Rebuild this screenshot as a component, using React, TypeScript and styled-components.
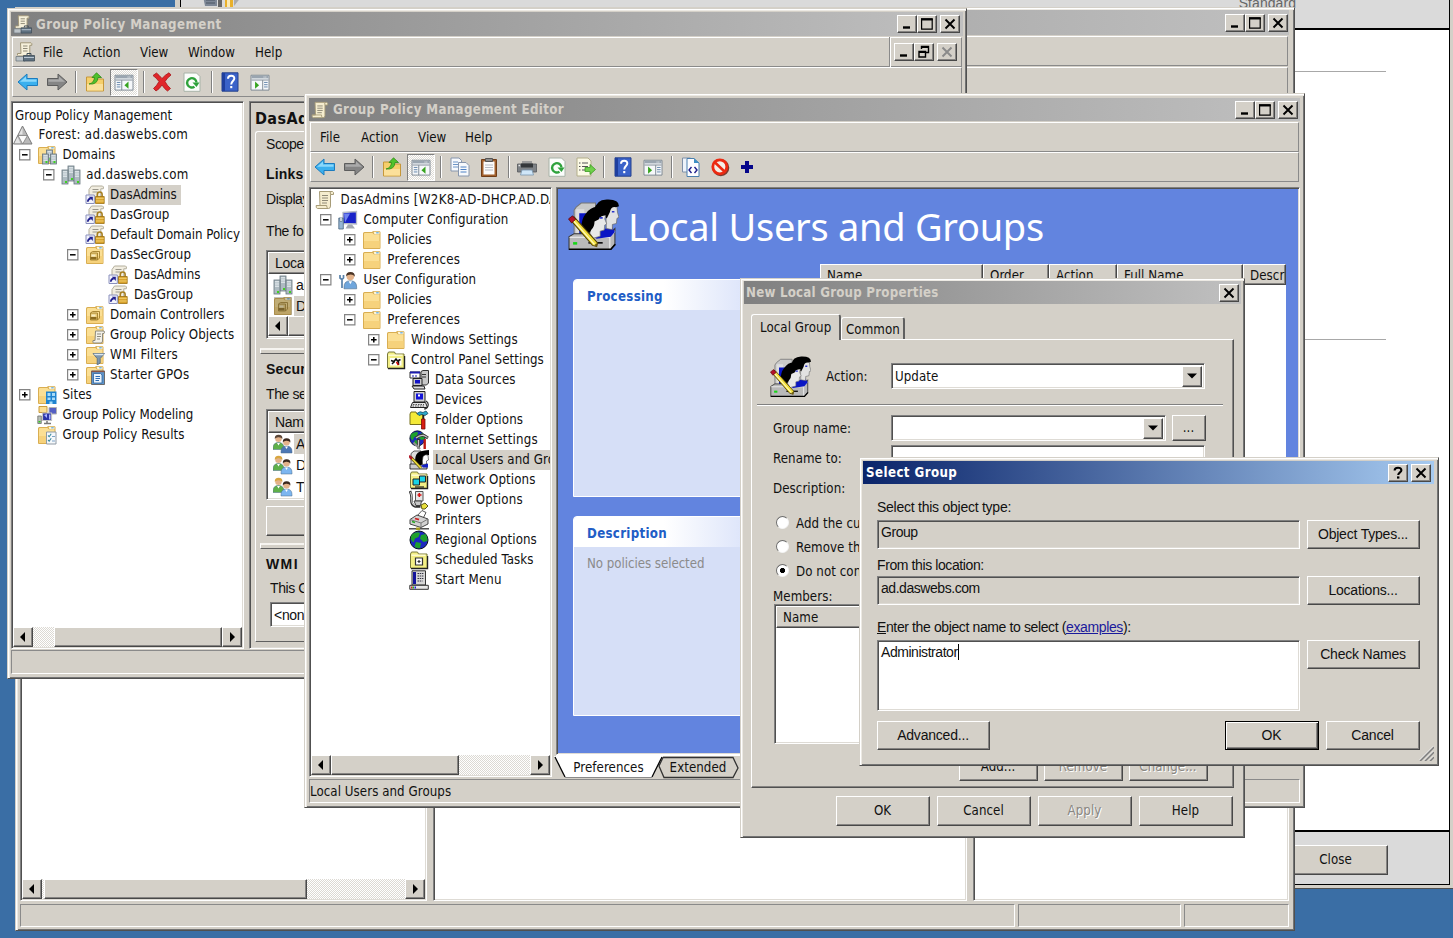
import React from 'react';
import styled, { createGlobalStyle, css } from 'styled-components';

const FACE = '#d4d0c8';
const TAHOMA = `'DejaVu Sans Condensed', 'DejaVu Sans', sans-serif`;
const MSSANS = `'Liberation Sans', sans-serif`;

const Global = createGlobalStyle`
  * { box-sizing: border-box; }
  html, body { margin: 0; padding: 0; overflow: hidden; }
  body { font: 13.2px ${TAHOMA}; font-stretch: condensed; letter-spacing: 0.06px; color: #111; background: #3a6ea5; }
  svg { display: block; flex: none; }
`;

const sunken = css`
  border: 1px solid;
  border-color: #808080 #fff #fff #808080;
  box-shadow: inset 1px 1px #505050, inset -1px -1px #dedbd5;
`;
const raised = css`
  border: 1px solid;
  border-color: #fff #484848 #484848 #fff;
  box-shadow: inset -1px -1px #868482;
`;

const Desktop = styled.main`
  position: relative;
  width: 1453px;
  height: 938px;
  overflow: hidden;
  background: #3a6ea5;
`;

const Win = styled.section<{ $x: number; $y: number; $w: number; $h: number; $pad: string }>`
  position: absolute;
  left: ${p => p.$x}px;
  top: ${p => p.$y}px;
  width: ${p => p.$w}px;
  height: ${p => p.$h}px;
  padding: ${p => p.$pad};
  display: flex;
  flex-direction: column;
  overflow: hidden;
  background: ${FACE};
  border: 1px solid;
  border-color: #d4d0c8 #505050 #505050 #d4d0c8;
  box-shadow: inset 1px 1px #fff, inset 2px 2px #ece9e3, inset -1px -1px #747474;
`;

const TitleBar = styled.header<{ $h: number; $active?: boolean; $sp?: number; $pr?: number }>`
  flex: none;
  height: ${p => p.$h}px;
  display: flex;
  align-items: center;
  padding: 0 ${p => p.$pr ?? 3}px 0 2px;
  font-weight: bold;
  letter-spacing: ${p => p.$sp ?? 0}px;
  color: ${p => (p.$active ? '#fff' : '#d4d0c8')};
  background: linear-gradient(to right, ${p => (p.$active ? '#0a246a, #a6caf0' : '#808080, #c0c0c0')});
  white-space: nowrap;
`;
const TitleText = styled.span<{ $ml?: number }>`
  flex: 1;
  margin-left: ${p => p.$ml ?? 0}px;
`;
const Caption = styled.button<{ $ml?: number }>`
  ${raised}
  flex: none;
  width: 20px;
  height: 18px;
  padding: 0;
  margin-left: ${p => p.$ml ?? 0}px;
  display: flex;
  align-items: center;
  justify-content: center;
  background: ${FACE};
`;

const Bar = styled.div<{ $h: number; $mt?: number }>`
  flex: none;
  display: flex;
  align-items: center;
  height: ${p => p.$h}px;
  margin: ${p => p.$mt ?? 0}px 1px 0 1px;
  border: 1px solid;
  border-color: #fff #8a8a8a #8a8a8a #fff;
`;
const MenuItem = styled.span<{ $w: number }>`
  width: ${p => p.$w}px;
`;
const Tool = styled.span<{ $w: number; $pressed?: boolean }>`
  width: ${p => p.$w}px;
  height: 27px;
  flex: none;
  display: flex;
  align-items: center;
  justify-content: center;
  ${p => p.$pressed && css`
    border: 1px solid;
    border-color: #808080 #fff #fff #808080;
    background: repeating-conic-gradient(#fff 0 25%, #dedbd5 0 50%) 0 0 / 2px 2px;
  `}
`;
const ToolSep = styled.i<{ $l: number; $r: number }>`
  flex: none;
  width: 2px;
  height: 22px;
  margin: 0 ${p => p.$r}px 0 ${p => p.$l}px;
  border-left: 1px solid #808080;
  border-right: 1px solid #fff;
`;

const Panes = styled.div<{ $mt: number; $h: number }>`
  flex: none;
  display: flex;
  margin-top: ${p => p.$mt}px;
  height: ${p => p.$h}px;
`;
const Pane = styled.div<{ $w?: number; $ml?: number; $bg?: string }>`
  ${sunken}
  ${p => (p.$w ? `flex: none; width: ${p.$w}px;` : 'flex: 1;')}
  margin-left: ${p => p.$ml ?? 0}px;
  padding: 1px;
  display: flex;
  flex-direction: column;
  overflow: hidden;
  background: ${p => p.$bg ?? '#fff'};
`;
const Tree = styled.ul<{ $pt?: number }>`
  flex: 1;
  margin: 0;
  padding: ${p => p.$pt ?? 1}px 0 0;
  list-style: none;
  overflow: hidden;
`;
const TreeRow = styled.li<{ $pl: number }>`
  display: flex;
  align-items: center;
  height: 20px;
  padding-left: ${p => p.$pl}px;
  white-space: nowrap;
`;
const ExpandSlot = styled.span`
  flex: none;
  width: 18px;
`;
const TreeLabel = styled.span<{ $sel?: boolean; $sp?: number }>`
  margin-left: 3.5px;
  padding: 0 4px 0 2px;
  line-height: 20px;
  letter-spacing: ${p => p.$sp ?? 0.08}px;
  background: ${p => (p.$sel ? FACE : 'transparent')};
`;

const ScrollRow = styled.div`
  flex: none;
  height: 20px;
  display: flex;
  background: repeating-conic-gradient(#fff 0 25%, #dcd9d3 0 50%) 0 0 / 2px 2px;
`;
const ScrollBtn = styled.span`
  ${raised}
  flex: none;
  width: 20px;
  height: 20px;
  display: flex;
  align-items: center;
  justify-content: center;
  background: ${FACE};
`;
const Thumb = styled.span<{ $ml: number; $w: number }>`
  ${raised}
  flex: none;
  margin-left: ${p => p.$ml}px;
  width: ${p => p.$w}px;
  background: ${FACE};
`;
const Grow = styled.span`
  flex: 1;
`;

const StatusRow = styled.footer<{ $mt: number; $h: number }>`
  flex: none;
  display: flex;
  gap: 3px;
  margin-top: ${p => p.$mt}px;
  height: ${p => p.$h}px;
`;
const StatusCell = styled.div<{ $w?: number }>`
  ${p => (p.$w ? `width: ${p.$w}px;` : 'flex: 1;')}
  line-height: 23px;
  border: 1px solid;
  border-color: #8a8a8a #fff #fff #8a8a8a;
`;

const Btn = styled.button<{ $w: number; $h: number; $def?: boolean; $off?: boolean }>`
  ${raised}
  flex: none;
  width: ${p => p.$w}px;
  height: ${p => p.$h}px;
  padding: 0 1px 1px 0;
  font: inherit;
  letter-spacing: inherit;
  color: #111;
  background: ${FACE};
  ${p => p.$def && css`
    border-color: #000;
    box-shadow: inset 1px 1px #fff, inset -1px -1px #404040, inset -2px -2px #868482;
  `}
  ${p => p.$off && css`
    color: #8a8782;
    text-shadow: 1px 1px #fff;
  `}
`;

/* ---------- glyphs ---------- */

type G = { s?: number };
const Svg = ({ s = 20, children }: { s?: number; children: React.ReactNode }) => (
  <svg width={s} height={s} viewBox="0 0 20 20">{children}</svg>
);

const MinG = () => <svg width="12" height="12" viewBox="0 0 12 12"><path d="M2 9.5h7" stroke="#000" strokeWidth="2.4" /></svg>;
const MaxG = () => (
  <svg width="14" height="14" viewBox="0 0 14 14"><path d="M1.6 2.6h10.6v9.600H1.6z" fill="none" stroke="#000" strokeWidth="1.2" /><path d="M1 2.2h11.8" stroke="#000" strokeWidth="2.2" /></svg>
);
const CloseG = ({ c = '#000' }: { c?: string }) => (
  <svg width="12" height="12" viewBox="0 0 12 12"><path d="M1.5 1.5l9 9M10.5 1.5l-9 9" stroke={c} strokeWidth="1.9" /></svg>
);
const RestoreG = () => (
  <svg width="14" height="14" viewBox="0 0 14 14" fill="none" stroke="#000"><path d="M4.5 4V1.5h7v6H9M4.5 2.4h7" strokeWidth="1.4" /><path d="M2 6.5h6.5v5.5H2zM2 7.2h6.5" strokeWidth="1.4" /></svg>
);
const HelpG = () => (
  <svg width="12" height="14" viewBox="0 0 12 14"><path d="M2.6 4.4C2.6 2.5 4 1.8 6 1.8s3.4.8 3.4 2.5C9.400 6.400 6.300 6.300 6.200 9" fill="none" stroke="#000" strokeWidth="2.1" /><path d="M5 10.400h2.400v2.200H5z" /></svg>
);
const ArrowG = ({ right }: { right?: boolean }) => (
  <svg width="10" height="10" viewBox="0 0 10 10"><path d={right ? 'M3 0l5 5-5 5z' : 'M7 0L2 5l5 5z'} /></svg>
);
const DownG = () => <svg width="10" height="6" viewBox="0 0 10 6"><path d="M0 .5h10L5 5.500z" /></svg>;

const Expander = ({ open }: { open?: boolean }) => (
  <svg width="12" height="12" viewBox="0 0 12 12"><path d="M.6.6h10.300v10.300H.6z" fill="#fff" stroke="#848484" strokeWidth="1.200" /><path d={open ? 'M3 5.800h5.600' : 'M3 5.800h5.600M5.800 3v5.600'} stroke="#000" strokeWidth="1.500" /></svg>
);

const FolderShape = () => (
  <g>
    <path d="M1 3.500Q1 2 2.500 2H10l1-1h6.500L18.500 2v16q0 1-1 1H2q-1 0-1-1z" fill="#d9ae52" />
    <path d="M2 4q0-1 1-1h7.500L12 4.500h5.500V18H2z" fill="#fbdf94" />
    <path d="M2 11h15.500v7H2z" fill="#f6d27c" />
    <path d="M11.500 1.800h6v2.400h-5z" fill="#fff6d8" /><path d="M14.200 2.200h2.500v1.200h-2.500z" fill="#59a7e6" />
  </g>
);
const ScrollShape = () => (
  <g>
    <path d="M4.500 1.500h13q1.500.5 1 3h-3V16q0 2.500-2 2.500H2.500q-1.800-.5-1.300-3H5z" fill="#f5edcf" stroke="#a79c78" />
    <path d="M15.500 4.500q-1-3 1-3M13 18.500q-1.500-.5-1.300-3H1.500" fill="none" stroke="#a79c78" />
    <path d="M7 5.500h6M7 8h6M7 10.500h6M7 13h5" stroke="#8f8a78" strokeWidth="1.100" />
  </g>
);
const Folder = ({ s }: G) => <Svg s={s}><FolderShape /></Svg>;
const ScrollI = ({ s }: G) => <Svg s={s}><ScrollShape /></Svg>;
const ScrollBox = ({ s }: G) => (
  <Svg s={s}>
    <path d="M5.500 .8h10.500q1.300.5.800 2.500h-2V14H3.500q-1.500-.5-1-2.500H6z" fill="#f6f0da" stroke="#a09678" /><path d="M8 4h4.500M8 6.500h4.500M8 9h4.500" stroke="#8f8a78" />
    <path d="M1 14.500h9V19H1z" fill="#bcc3c8" stroke="#70797f" strokeWidth=".8" />
    <path d="M8.500 13.500h11V19h-11z" fill="#5f7180" stroke="#3f4c58" strokeWidth=".8" /><path d="M12 13v-1.500h4V13" fill="none" stroke="#3f4c58" /><path d="M9 15.500h10" stroke="#b9c6d2" />
  </Svg>
);
const GpoLink = () => (
  <Svg>
    <path d="M6.500 1h11q1.500.5.800 2.800h-2.500V14H4V4.500z" fill="#f1ede0" stroke="#b3ae9c" /><path d="M7.500 4.500h6M7.500 7h5" stroke="#9a978c" />
    <path d="M1 10h8.300v8.500H1z" fill="#f2f3fb" stroke="#8a90bd" /><path d="M2.800 16.800q0-2.800 3-3.500" fill="none" stroke="#23238f" strokeWidth="1.700" /><path d="M3.800 11.700H7.800v4.200z" fill="#23238f" />
    <path d="M12.300 12V9.500q0-2.500 2.400-2.500t2.400 2.500V12" fill="none" stroke="#a67f22" strokeWidth="1.600" /><path d="M10.500 11.500h8.700v7h-8.700z" fill="#d9a32c" stroke="#9c7114" strokeWidth=".8" /><path d="M11 13.300h7.800M11 16h7.800" stroke="#f2cf70" />
  </Svg>
);
const Server = ({ x, y, h }: { x: number; y: number; h: number }) => (
  <g><rect x={x} y={y} width="6" height={h} fill="#aebbc2" stroke="#66757e" strokeWidth=".8" /><path d={`M${x + 1} ${y + 1.800}h4M${x + 1} ${y + 4}h4M${x + 1} ${y + 6.200}h4`} stroke="#eef3f6" /><rect x={x + 3} y={y + h - 3} width="2" height="2" fill="#3fd320" /></g>
);
const Servers = () => <Svg><Server x={7} y={1} h={15} /><Server x={1} y={5} h={14} /><Server x={13} y={5} h={14} /></Svg>;
const DomainFolder = () => <Svg><FolderShape /><Server x={9.500} y={5} h={11} /><Server x={5.500} y={9} h={10} /><Server x={13.500} y={9} h={10} /></Svg>;
const Ou = ({ dim }: { dim?: boolean }) => (
  <Svg><FolderShape /><path d="M5.500 8h7v7h-7z" fill="#e8c873" stroke="#a27f2c" strokeWidth=".9" /><path d="M5.500 8l2-1.500h7V13l-2 2" fill="none" stroke="#a27f2c" strokeWidth=".9" /><path d="M5.500 12h6v2.500h-6z" fill="#8c6b1f" /><path d="M6.500 9.500h4v2h-4z" fill="#f7ecc4" />{dim && <path d="M1 1h18v18H1z" fill="#54503f" opacity=".35" />}</Svg>
);
const FolderScroll = () => <Svg><FolderShape /><path d="M10.500 6H19q1 1 0 2.500h-1.500V16q0 2-1.500 2H8.500q-1-.5-.5-2.500h2z" fill="#f2f0e8" stroke="#8d8a7e" /><path d="M12 9h4M12 11.500h4M12 14h3" stroke="#8d8a7e" /></Svg>;
const FolderFilter = () => <Svg><FolderShape /><path d="M8 8.500h11.500l-4.300 5V18l-3 2v-6.500z" fill="#7f97ad" stroke="#54697d" strokeWidth=".8" /><path d="M8.500 8.800h10.500l-1 1.500h-8z" fill="#dce7f0" /></Svg>;
const Starter = () => <Svg><FolderShape /><path d="M6.500 6h13v13.500h-13z" fill="#5e93c9" stroke="#6b6b6b" /><path d="M8.500 8.500h7l1.500 1.500v8H8.500z" fill="#e9f3fc" stroke="#2f64a0" strokeWidth=".8" /><path d="M10.500 11.500h4.500M10.500 13.500h4.500M10.500 15.500h3.500" stroke="#2b6cb5" /><path d="M6.500 6.500h13" stroke="#8a5545" strokeWidth="1.300" /></Svg>;
const Sites = () => <Svg><FolderShape /><path d="M9 6.500h10.500v12.500H9z" fill="#2184cf" /><path d="M10.500 8h3v3h-3zM15 8h3v3h-3zM10.500 12.500h3v2.500h-3zM15 12.500h3v2.500h-3zM12.500 16.500h3V19h-3z" fill="#a8dcf8" /></Svg>;
const Modeling = () => (
  <Svg><path d="M2 1.500h8v6H2z" fill="#fbdf94" stroke="#c99b3b" /><path d="M12 2.500h7.500V9H12z" fill="#5560c4" stroke="#b4b4b4" /><path d="M5.500 8h9v7.500h-9z" fill="#2b34a8" stroke="#c3c3c3" strokeWidth="1.200" /><path d="M12 9.500h1.500v5H12zM7 10l3-1v4z" fill="#aab4ff" /><path d="M7 18.500h7M10 16v2" stroke="#777" strokeWidth="1.500" /><path d="M.8 11h3.500v7.500H.8z" fill="#b8c0b8" stroke="#6f6f6f" strokeWidth=".8" /><path d="M1.500 16h2v1.500h-2z" fill="#2fc51d" /></Svg>
);
const Results = () => <Svg><FolderShape /><path d="M9.500 7h9.500v12H9.500z" fill="#f5f8fb" stroke="#8f9aa5" /><path d="M11 10.500l1.200 1.200 2-3M11 15l1.200 1.200 2-3" fill="none" stroke="#3a8a9c" strokeWidth="1.100" /><path d="M15 11.500h3M15 16h3" stroke="#7fa3c7" /></Svg>;
const Forest = () => <Svg><path d="M9.500 1L.5 19h18.500z" fill="#b9b9b9" stroke="#7b7b7b" /><path d="M5 10.500h9.500L9.700 19z" fill="#fafafa" stroke="#7d7d7d" strokeWidth=".8" /><path d="M9.500 2.500L6 9.500h3.500zM4.500 12l-3 6.300h6z" fill="#e4e4e4" /></Svg>;
const Computer = () => <Svg><path d="M5 2.500l13.500-1V14L5 13.500z" fill="#1822c8" stroke="#b7bcc8" strokeWidth="1.300" /><path d="M6 3.500l6 0-5 9z" fill="#6f83ee" /><path d="M10 14.500h4l3 4H7.500z" fill="#a4a9b0" /><path d="M.8 8h4.500v11H.8z" fill="#96b6d4" stroke="#49657f" strokeWidth=".8" /><path d="M2 8v3.500h2V8" fill="#fff" stroke="#49657f" strokeWidth=".6" /></Svg>;
const Person = ({ x, y, body, hair, k = 1 }: { x: number; y: number; body: string; hair: string; k?: number }) => (
  <g transform={`translate(${x} ${y}) scale(${k})`}><path d="M0 14q0-5.500 5.500-5.500T11 14v1.500H0z" fill={body} stroke="#496b88" strokeWidth=".5" /><circle cx="5.500" cy="4.800" r="3.300" fill="#e3b28a" /><path d="M1.800 5Q1.500 .8 5.600.8T9.400 5Q8 2.800 5 3.200T1.800 5" fill={hair} /><path d="M4 9l1.500 2.500L7 9z" fill="#fff" /></g>
);
const User = () => <Svg><Person x={6} y={1} k={1.150} body="#6fa6dc" hair="#4c3526" /><path d="M2 5v3l2 1.500V18M5.500 5v3L4 9.500" fill="none" stroke="#5881a9" strokeWidth="1.700" /></Svg>;
const Users = ({ dim }: { dim?: boolean }) => <Svg><Person x={0} y={0} body="#5fb049" hair={dim ? '#5b4638' : '#d8a640'} /><Person x={8} y={3.500} body={dim ? '#4d78b5' : '#7db6f0'} hair="#3a281e" /></Svg>;

const OldFolder = ({ y = 4 }: { y?: number }) => (
  <g><path d={`M1.500 ${y}l1-2h6l1 2H18v14H1.500z`} fill="#f3ef86" stroke="#7a7a3c" /><path d={`M2.500 ${y + 1.200}h14`} stroke="#fffde0" strokeWidth="1.200" /><path d="M18.600 6v12.600H2" fill="none" stroke="#222" strokeWidth="1.200" /></g>
);
const CpFolder = () => <Svg><OldFolder /><path d="M4 8h11.500v7.500H4z" fill="#fff" /><path d="M5 10.500l3 1 2-2.500 1.500 2 3-1.500" fill="none" stroke="#111" strokeWidth="1.600" /><path d="M6 14l2.500-2.500M12.500 11v4" stroke="#111" strokeWidth="1.500" /><path d="M10.500 12l2 3" stroke="#c00" strokeWidth="1.500" /></Svg>;
const DataSrc = () => <Svg><path d="M1 2h10v6H1z" fill="#fff" stroke="#333" /><path d="M1 2.500h10" stroke="#1c1cb0" strokeWidth="2" /><path d="M3 6h6" stroke="#1c1cb0" strokeDasharray="2 1" /><path d="M12 1.500l2-1h5.500V13l-2 2H12z" fill="#c8c8c8" stroke="#333" /><path d="M13 4.500h4M13 7h4" stroke="#333" /><path d="M4 8.500h9v7H4z" fill="#c8c8c8" stroke="#222" /><path d="M6 10h5v3.500H6z" fill="#1414c8" /><path d="M3 16h12l1 3H5z" fill="#ddd" stroke="#222" /></Svg>;
const Devices = () => <Svg><path d="M5 1.500h11V12H5z" fill="#d0d0d0" stroke="#222" /><path d="M7 3.500h7v6H7z" fill="#1414d8" /><path d="M9 4.500h2v2H9z" fill="#fff" /><path d="M3.500 12.500h13l2 5H1.500z" fill="#e4e4e4" stroke="#222" /><path d="M4 14.500h11M3.500 16h12" stroke="#555" strokeDasharray="1.500 1" /><path d="M17 11q3 2 2 5t-4 3" fill="none" stroke="#333" strokeWidth="1.200" /></Svg>;
const FolderOpt = () => <Svg><path d="M1 4l1-2h5l1 2h5.500v10.500H1z" fill="#f4ea38" stroke="#77701c" /><path d="M8 3.500q3-3 6-1l3-1.500 2 2.500-3 2q-3-2-6 0z" fill="#2ba8c9" stroke="#124b66" strokeWidth=".8" /><path d="M14.500 5v4" stroke="#222" strokeWidth="1.500" /><path d="M12.500 9h3.500v10h-3.500z" fill="#d81e12" stroke="#7a0e08" strokeWidth=".8" /></Svg>;
const Globe = () => <g><circle cx="10" cy="10" r="9" fill="#1d28bf" stroke="#06101c" /><path d="M3 4.500Q8 1 11 3L9.500 7 6 8.500l-1.500 4Q1 10 2 6.500zM12 5l4.500-1Q19 7 18.500 11l-4 1-3.500-3.500zM7 12l5 1-1 5Q7 18.500 5.500 16.500z" fill="#1ea02c" /></g>;
const Regional = () => <Svg><Globe /></Svg>;
const Internet = () => <Svg><g transform="scale(.84)"><Globe /></g><path d="M7 8q4-3.500 8-2.500l4 2.500M9.500 18.500V9" fill="none" stroke="#333" strokeWidth="3" /><path d="M7 8q4-3.500 8-2.500l3.500 2M9.500 18V10" fill="none" stroke="#c4c4c4" strokeWidth="1.300" /><path d="M15.700 9v10" stroke="#bd1a12" strokeWidth="2.400" /><path d="M4.500 12.500l6.500 6.500" stroke="#8d8d8d" strokeWidth="2.200" /></Svg>;
const NetOpt = () => <Svg><OldFolder /><path d="M4 9h6.500v6H4zM10.500 6h6v6h-6z" fill="#17d4e6" stroke="#222" /><path d="M6 17h9" stroke="#222" strokeWidth="1.200" /></Svg>;
const Power = () => <Svg><path d="M6.500 1.500h7.500v9.500H6.500z" fill="#e6e6e6" stroke="#555" /><path d="M10.300 3v4M8.500 5h4" stroke="#d81212" strokeWidth="1.600" /><path d="M1 1q2 4 1.500 9t4 6.500h5" fill="none" stroke="#333" strokeWidth="2.600" /><path d="M1.500 2q1.800 4 1.300 8t4 6" fill="none" stroke="#ccc" strokeWidth="1.100" /><path d="M5 11h7.500l-1 4.500H7z" fill="#c9c9c9" stroke="#444" /><path d="M12 15l4-2 3 3-3 3h-3z" fill="#e8df3c" stroke="#5c571a" /></Svg>;
const PrinterC = () => <Svg><path d="M8 6l5-5.500 4 2-3 6z" fill="#fff" stroke="#444" strokeWidth=".9" /><path d="M1 9.500L8 5l11 4v5L12 17.500 1 14z" fill="#d2d2d2" stroke="#333" strokeWidth=".9" /><path d="M1 9.500l11 3.500 7-4M12 13v4.500" fill="none" stroke="#777" /><path d="M6 8.500l4 1.200" stroke="#c22" strokeWidth="1.800" /><path d="M3 11.500l3 1" stroke="#2a2" strokeWidth="1.600" /><path d="M0 18.800h20" stroke="#333" strokeWidth="1.300" /><path d="M7 17.500h4V20H7z" fill="#a89e24" /></Svg>;
const Sched = () => <Svg><OldFolder /><path d="M6.500 8h7V15h-7z" fill="#fff" stroke="#333" strokeWidth="1.200" /><path d="M8.500 11.500h3M10 10v3" stroke="#333" strokeWidth="1.200" /></Svg>;
const StartM = () => <Svg><path d="M3 .8h13.500V15H3z" fill="#d7d7d7" stroke="#333" /><path d="M4 2h3v12H4z" fill="#14149c" /><path d="M8.500 3.500h6M8.500 6h6M8.500 8.500h6M8.500 11h5" stroke="#334" strokeDasharray="1.500 .7" /><path d="M.8 15.300h18.500v4H.8z" fill="#e8e8e8" stroke="#333" /><path d="M2 17.500h1.500" stroke="#d22" strokeWidth="2" /><path d="M3.500 17.500H5" stroke="#2a2" strokeWidth="2" /><path d="M5.500 17.500H7" stroke="#22d" strokeWidth="2" /></Svg>;

const UsersArt = ({ s }: { s: number }) => (
  <svg width={s} height={s} viewBox="0 0 50 50">
    <path d="M8 8l5-4h14v32H6V11z" fill="#c9c9c9" stroke="#777" strokeWidth="1" />
    <path d="M8 10h8v24H8z" fill="#dedede" /><path d="M11 14h9l-3 22h-6z" fill="#0a16c4" />
    <path d="M1 37l5-3h35l5-5v15l-4 5.500H1z" fill="#b9b9b9" stroke="#333" strokeWidth="1" />
    <path d="M1.500 37.500H41V49M41 37.500l5-6" fill="none" stroke="#f2f2f2" /><path d="M1 49.300h41l4.500-5" fill="none" stroke="#000" strokeWidth="1.500" />
    <path d="M5 43.500h4" stroke="#16d616" strokeWidth="2.500" /><path d="M20 43h14" stroke="#000" strokeWidth="1.500" />
    <path d="M24 36l10-6 9-3 3 5-4 5-14 2z" fill="#0a16c4" />
    <path d="M37 7h11l.5 6 1.500 5-2 1-.5 5-4 1v5l-6-1z" fill="#e2e2e2" stroke="#666" strokeWidth=".7" />
    <path d="M26 11Q27 1 38 .5q12-.5 12 6.500l-3 1q-5-1-6 5l-3 6-6-7z" fill="#000" />
    <path d="M25 17l12-1.500-1 4 2 5-2 1-.5 5-4 1 0 5-7 2-3-5z" fill="#e8e8e8" stroke="#777" strokeWidth=".7" />
    <path d="M13 29q0-9 4-14 6-9 15-7 7 2 6 8-6 0-8 4l-4 2q0 5-3 8l-3 5q-5 0-7-6z" fill="#000" />
    <path d="M31 18.500h3M43 12.500h2.500" stroke="#2b35c9" strokeWidth="1.600" />
    <path d="M2 20l4-2.500L29 43l-1 3.500-4-1z" fill="#f3df3a" stroke="#4d3d05" strokeWidth="1" /><path d="M5 21l21 23.500" stroke="#fffbc0" strokeWidth="1.300" />
    <path d="M.5 19.500l4-3 3 3.500-4 3.500z" fill="#b3122a" stroke="#500" strokeWidth=".7" /><path d="M26 45l3-2-.5 4.500z" fill="#6b5a14" />
  </svg>
);
const LocalUsers = () => (
  <Svg><path d="M2 3.500L5 1h7v14H2z" fill="#ddd" stroke="#333" strokeWidth=".8" /><path d="M1 14h17v5H1z" fill="#ccc" stroke="#111" strokeWidth=".8" /><path d="M6 11Q6 3 11 1.500T20 0v5q-4 0-4 4t-4 6q-4 1-6-4z" fill="#000" /><path d="M14 6.500q2-2.500 5-1.500l.5 5-2 1v3l-4 .5q-.5-4 .5-8z" fill="#fff" stroke="#333" strokeWidth=".6" /><path d="M12 15.500l7-2v4h-5z" fill="#1420c4" /><path d="M1.500 7L12 18" stroke="#52470a" strokeWidth="3" /><path d="M1.500 7L12 18" stroke="#efdf3e" strokeWidth="1.700" /><path d="M0 5.800l3 3" stroke="#b31a2c" strokeWidth="2.400" /></Svg>
);

/* toolbar */
const Arrow = ({ back }: { back?: boolean }) => (
  <svg width="22" height="20" viewBox="0 0 22 20">
    <path transform={back ? undefined : 'translate(22 0) scale(-1 1)'} d="M1 10l9-8v4.500h10.500v7H10V18z" fill={back ? '#3bb0ee' : '#858585'} stroke={back ? '#1c7cbe' : '#5d5d5d'} strokeLinejoin="round" />
    <path transform={back ? undefined : 'translate(22 0) scale(-1 1)'} d="M3 9.800l6-5.300v3h10.500v2.300z" fill={back ? '#8bd8fb' : '#ababab'} />
  </svg>
);
const FolderUp = () => <Svg><path d="M1.500 5h7l1.500 2h8.500v12h-17z" fill="#f5cf6b" stroke="#c6973a" /><path d="M2 12h16v6.500H2z" fill="#fbe09a" /><path d="M4 12q5-1 5.500-6.500H7L11.500.800l5 4.700H13Q12.500 13 4 12z" fill="#4fc22c" stroke="#2d8c17" strokeWidth=".8" /></Svg>;
const PaneIcon = ({ flip }: { flip?: boolean }) => (
  <svg width="20" height="18" viewBox="0 0 22 20">
    <path d="M1 2.500h20v16.500H1z" fill="#f6f8fa" stroke="#76828d" /><path d="M1.500 3h19v3h-19z" fill="#9aa5b0" /><path d="M15 4.500h4" stroke="#fff" strokeDasharray="1 1" /><path d="M1.500 7.800h19" stroke="#8c96a0" strokeWidth="1.200" />
    {flip
      ? <g><path d="M14 8v11" stroke="#76828d" /><path d="M15.500 10.500h4M15.500 13h4M15.500 15.500h4" stroke="#5a7ea5" /><path d="M5.500 9.500l4.500 4-4.500 4z" fill="#37a41f" /></g>
      : <g><path d="M8.500 8v11" stroke="#76828d" /><path d="M3 10.500h4M3 13h4M3 15.500h4" stroke="#5a7ea5" /><path d="M16 9.500l-4.500 4 4.500 4z" fill="#37a41f" /></g>}
  </svg>
);
const RedX = () => <Svg><path d="M1 3.500L4.500 1Q7 3 10 6.500 13 3 17 .800L19 3q-4 3-6 6.500 2 4 5.500 7L15.500 19q-3-2-5.500-6-2.500 4-6 6L1.500 16.500Q5 13.500 7 9.500 4.500 6 1 3.500z" fill="#e0262a" stroke="#a8161a" strokeWidth=".8" /></Svg>;
const Refresh = () => <Svg><path d="M2 1h12.500L18 4.500V19.300H2z" fill="#fbfdfb" stroke="#a8b3a8" /><path d="M14.500 10.500a4.700 4.700 0 1 0-2 4.200" fill="none" stroke="#2fa23c" strokeWidth="2.400" /><path d="M10.500 10.500h7l-3 4.500z" fill="#2fa23c" /></Svg>;
const HelpBook = () => <Svg><path d="M2 .8h16v18.400H2z" fill="#3a62c9" stroke="#24408c" /><path d="M2 1h3v18H2z" fill="#1f3f9e" /><path d="M8 6.800Q8 3.800 11.200 3.800T14.300 6.600C14.300 9 11.200 9.300 11.200 12.500" fill="none" stroke="#fff" strokeWidth="2" /><path d="M10.200 14h2.100v2.200h-2.100z" fill="#fff" /></Svg>;
const CopyI = () => <Svg><path d="M1 1h8l2.500 2.500V14H1z" fill="#f7f9fc" stroke="#8796ad" /><path d="M3 5h5M3 7.500h5M3 10h5" stroke="#6d95c8" /><path d="M8.500 5.500h7.500L19 8.500V19H8.500z" fill="#f7f9fc" stroke="#8796ad" /><path d="M10.500 10h6M10.500 12.500h6M10.500 15h6" stroke="#4f82c4" /></Svg>;
const Clip = () => <Svg><path d="M2.500 2.500h15v17h-15z" fill="#a2602c" stroke="#6f3d17" /><path d="M4.500 4.500h11v13h-11z" fill="#fbfbfb" /><path d="M6.500 1.500h7v3h-7z" fill="#8f8f8f" stroke="#555" /><path d="M6 8h8M6 10.500h8M6 13h8" stroke="#b7bcc5" /></Svg>;
const PrintI = () => <Svg><path d="M5 4h10v4H5z" fill="#9b9b9b" /><path d="M.5 7h19v8H.5z" fill="#7e8286" stroke="#55585b" strokeWidth=".8" /><path d="M4 6.500h12v4H4z" fill="#35383b" /><path d="M5 13h10l1.500 5h-13z" fill="#cfe6f8" stroke="#7895ad" strokeWidth=".8" /><path d="M1.500 8.500h1.500" stroke="#e8e8e8" strokeWidth="1.500" /></Svg>;
const Export = () => <Svg><path d="M1 1h11l3 3v15H1z" fill="#fcfae6" stroke="#b3ae8a" /><path d="M3 6h1.500M6 6h6M3 9.500h1.500M6 9.500h6M3 13h1.500M6 13h4" stroke="#555" strokeWidth="1.100" /><path d="M9 10.500h5V7.500l5.500 5-5.500 5V14.500H9z" fill="#6fd04b" stroke="#3b9a22" strokeWidth=".8" /></Svg>;
const ScriptI = () => <Svg><path d="M1.500 1h8l1.500 3v11H1.500z" fill="#eef3f9" stroke="#7f90a8" /><path d="M6 4V1.500h7L18 6v13.500H6z" fill="#fdfdff" stroke="#4a7fae" /><path d="M13 1.500V6h5z" fill="#3d8fc4" /><path d="M10.500 10l-2.500 3 2.500 3M13.500 10l2.500 3-2.500 3" fill="none" stroke="#20208c" strokeWidth="1.400" /></Svg>;
const NoI = () => <Svg><circle cx="10.800" cy="10.800" r="7.200" fill="none" stroke="#7b3b30" strokeWidth="2.600" /><circle cx="9.800" cy="9.800" r="7" fill="#f4efe8" stroke="#ec2a12" strokeWidth="2.800" /><path d="M5 5.500l9.500 9" stroke="#ec2a12" strokeWidth="2.600" /></Svg>;
const PlusI = () => <Svg><path d="M8 4v12M2 10h12" stroke="#05058a" strokeWidth="4" /></Svg>;

/* ---------- shared parts ---------- */

type Node = { t: string; lv: number; i: React.ReactNode; ex?: 'open' | 'closed'; sel?: boolean; sp?: number };

const TreeView = ({ base, items }: { base: number; items: Node[] }) => (
  <>
    {items.map((n, k) => (
      <TreeRow key={k} $pl={base + n.lv * 23.800}>
        <ExpandSlot>{n.ex && <Expander open={n.ex === 'open'} />}</ExpandSlot>
        {n.i}
        <TreeLabel $sel={n.sel} $sp={n.sp}>{n.t}</TreeLabel>
      </TreeRow>
    ))}
  </>
);
const HScroll = ({ ml, w }: { ml: number; w: number }) => (
  <ScrollRow>
    <ScrollBtn><ArrowG /></ScrollBtn>
    <Thumb $ml={ml} $w={w} />
    <Grow />
    <ScrollBtn><ArrowG right /></ScrollBtn>
  </ScrollRow>
);
const WinButtons = () => (
  <><Caption><MinG /></Caption><Caption><MaxG /></Caption><Caption $ml={3}><CloseG /></Caption></>
);

/* ---------- background wizard ---------- */

const Wizard = styled.section`
  position: absolute;
  left: 175px;
  top: -20px;
  width: 1280px;
  height: 909px;
  padding: 0 5px 4px 5px;
  background: ${FACE};
  border-bottom: 1px solid #505050;
`;
const WizardFrame = styled.div`
  height: 905px;
  width: 1270px;
  border: solid #000;
  border-width: 1px 1.500px 1px 1px;
  display: flex;
  flex-direction: column;
  background: #fff;
`;
const WizardTop = styled.div`
  height: 49px;
  flex: none;
  padding: 15px 153px 0 20px;
  display: flex;
  justify-content: space-between;
  background: #dadada;
  border-bottom: 2px solid #000;
  color: #666;
`;
const WizardBody = styled.div`
  flex: 1;
  padding: 41px 63px 0 0;
`;
const WizardLine = styled.div<{ $gap: number }>`
  height: 1px;
  margin-bottom: ${p => p.$gap}px;
  background: #a8a8a8;
`;
const WizardFoot = styled.div`
  height: 54px;
  flex: none;
  display: flex;
  justify-content: flex-end;
  padding: 13px 61px 0 0;
  background: #dadada;
  border-top: 2px solid #000;
`;
const StandardLabel = styled.span`
  font-family: ${MSSANS};
  font-size: 14px;
  line-height: 14px;
`;

const WizardWindow = () => (
  <Wizard>
    <WizardFrame>
      <WizardTop>
        <svg width="50" height="11" viewBox="0 0 50 11"><path d="M2 0h14v10H4z" fill="#7d8796" /><path d="M5 4h9M5 7h9" stroke="#4b5563" /><path d="M17 0h4v11h-4z" fill="#666" /><path d="M24 0h8v11h-8z" fill="#e9b02a" /><path d="M26 0h3v11h-3z" fill="#fbe9b4" /><path d="M33 10l8-10h-8z" fill="#aaa" /></svg>
        <StandardLabel>Standard</StandardLabel>
      </WizardTop>
      <WizardBody>
        <WizardLine $gap={267} />
        <WizardLine $gap={0} />
      </WizardBody>
      <WizardFoot><Btn $w={104} $h={30}>Close</Btn></WizardFoot>
    </WizardFrame>
  </Wizard>
);

/* ---------- server console ---------- */

const ServerConsole = () => (
  <Win $x={15} $y={7} $w={1280} $h={924} $pad="2px 5px 4px 4px">
    <TitleBar $h={25} $pr={1}><TitleText /><WinButtons /></TitleBar>
    <Bar $h={30} $mt={1} />
    <Bar $h={29} $mt={1} />
    <Panes $mt={5} $h={800}>
      <Pane $w={407}><Grow /><HScroll ml={2} w={263} /></Pane>
      <Pane $w={534} $ml={6} />
      <Pane $ml={6} />
    </Panes>
    <StatusRow $mt={3} $h={23}><StatusCell /><StatusCell $w={163} /><StatusCell $w={105} /></StatusRow>
  </Win>
);

/* ---------- group policy management ---------- */

const MdiButtons = styled.div`
  height: 30px;
  margin-left: auto;
  padding: 0 4px 0 3px;
  display: flex;
  align-items: center;
  border-left: 1px solid #fff;
  box-shadow: -1px 0 #8a8a8a;
`;
const PageTitle = styled.h2`
  margin: 0;
  padding: 6px 0 0 4px;
  font-size: 16px;
  letter-spacing: 0.400px;
  line-height: 19px;
  height: 28px;
  white-space: nowrap;
`;
const ScopePage = styled.div`
  height: 511px;
  margin-left: 4px;
  width: 600px;
  padding-left: 10px;
  border: 1px solid;
  border-color: #fff #606060 #606060 #fff;
  border-top-left-radius: 3px;
  font-family: ${MSSANS};
  font-size: 14px;
  letter-spacing: -0.300px;
  white-space: nowrap;
`;
const ScopeText = styled.div<{ $mt: number; $b?: boolean; $pl?: number; $sp?: number }>`
  margin-top: ${p => p.$mt}px;
  padding-left: ${p => p.$pl ?? 0}px;
  height: 16px;
  line-height: 16px;
  letter-spacing: ${p => p.$sp ?? (p.$b ? 0.2 : -0.4)}px;
  font-weight: ${p => (p.$b ? 'bold' : 'normal')};
`;
const ScopeList = styled.div<{ $mt: number; $h: number }>`
  ${sunken}
  margin-top: ${p => p.$mt}px;
  height: ${p => p.$h}px;
  padding: 1px;
  background: #fff;
`;
const ListHead = styled.div<{ $h: number }>`
  ${raised}
  height: ${p => p.$h}px;
  padding-left: 6px;
  line-height: ${p => p.$h - 1}px;
  background: ${FACE};
`;
const ListRow = styled.div<{ $h: number }>`
  height: ${p => p.$h}px;
  padding-left: 5px;
  display: flex;
  align-items: center;
`;
const ListCell = styled.span<{ $sel?: boolean }>`
  padding: 2px 60px 2px 2px;
  margin-left: 1px;
  background: ${p => (p.$sel ? FACE : 'transparent')};
`;
const ScopeRule = styled.div<{ $mt: number }>`
  margin: ${p => p.$mt}px 0 0 -6px;
  height: 6px;
  border-top: 2px solid #f6f4f0;
  border-bottom: 1.500px solid #606060;
  border-left: 1px solid #fff;
`;
const ScopeSelect = styled.div`
  ${sunken}
  margin: 6px 0 0 4px;
  height: 25px;
  padding-left: 3px;
  line-height: 24px;
  background: #fff;
`;

const gpmTree: Node[] = [
  { t: 'Domains', lv: 0, i: <DomainFolder />, ex: 'open' },
  { t: 'ad.daswebs.com', lv: 1, i: <Servers />, ex: 'open', sp: 0.2 },
  { t: 'DasAdmins', lv: 2, i: <GpoLink />, sel: true, sp: 0 },
  { t: 'DasGroup', lv: 2, i: <GpoLink /> },
  { t: 'Default Domain Policy', lv: 2, i: <GpoLink />, sp: -0.05 },
  { t: 'DasSecGroup', lv: 2, i: <Ou />, ex: 'open' },
  { t: 'DasAdmins', lv: 3, i: <GpoLink />, sp: 0 },
  { t: 'DasGroup', lv: 3, i: <GpoLink /> },
  { t: 'Domain Controllers', lv: 2, i: <Ou />, ex: 'closed', sp: 0 },
  { t: 'Group Policy Objects', lv: 2, i: <FolderScroll />, ex: 'closed' },
  { t: 'WMI Filters', lv: 2, i: <FolderFilter />, ex: 'closed', sp: 0.3 },
  { t: 'Starter GPOs', lv: 2, i: <Starter />, ex: 'closed', sp: 0.2 },
  { t: 'Sites', lv: 0, i: <Sites />, ex: 'closed' },
  { t: 'Group Policy Modeling', lv: 0, i: <Modeling />, sp: -0.05 },
  { t: 'Group Policy Results', lv: 0, i: <Results /> },
];

const Manager = () => (
  <Win $x={7} $y={8} $w={960} $h={671} $pad="3px 3px 3px 3px">
    <TitleBar $h={24} $sp={0.420} $pr={3}>
      <ScrollBox s={19} /><TitleText $ml={4}>Group Policy Management</TitleText><WinButtons />
    </TitleBar>
    <Bar $h={30} $mt={1}>
      <Tool $w={24}><ScrollBox /></Tool>
      <MenuItem $w={6} />
      <MenuItem $w={40}>File</MenuItem><MenuItem $w={57}>Action</MenuItem><MenuItem $w={48}>View</MenuItem><MenuItem $w={67}>Window</MenuItem><MenuItem $w={40}>Help</MenuItem>
      <MdiButtons><Caption><MinG /></Caption><Caption><RestoreG /></Caption><Caption $ml={3}><CloseG c="#8a8a8a" /></Caption></MdiButtons>
    </Bar>
    <Bar $h={30}>
      <Tool $w={29}><Arrow back /></Tool><Tool $w={29}><Arrow /></Tool>
      <ToolSep $l={4} $r={7} />
      <Tool $w={22}><FolderUp /></Tool><MenuItem $w={4} /><Tool $w={28} $pressed><PaneIcon /></Tool>
      <ToolSep $l={5} $r={6} />
      <Tool $w={22}><RedX /></Tool><Tool $w={38}><Refresh /></Tool>
      <ToolSep $l={0} $r={6} />
      <Tool $w={22}><HelpBook /></Tool><Tool $w={38}><PaneIcon flip /></Tool>
    </Bar>
    <Panes $mt={4} $h={548}>
      <Pane $w={233}>
        <Tree $pt={2}>
          <TreeRow $pl={2}>Group Policy Management</TreeRow>
          <TreeRow $pl={0}><Forest /><TreeLabel $sp={0.280}>Forest: ad.daswebs.com</TreeLabel></TreeRow>
          <TreeView base={6} items={gpmTree} />
        </Tree>
        <HScroll ml={21} w={168} />
      </Pane>
      <Pane $ml={5} $bg={FACE}>
        <PageTitle>DasAdmins</PageTitle>
        <ScopePage>
          <ScopeText $mt={4}>Scope</ScopeText>
          <ScopeText $mt={14} $b>Links</ScopeText>
          <ScopeText $mt={9}>Display links in this location:</ScopeText>
          <ScopeText $mt={16}>The following sites</ScopeText>
          <ScopeList $mt={11} $h={89}>
            <ListHead $h={22}>Location</ListHead>
            <ListRow $h={21}><Servers /><ListCell>ad.daswebs.com</ListCell></ListRow>
            <ListRow $h={21}><Ou dim /><ListCell $sel>DasSecGroup</ListCell></ListRow>
            <HScroll ml={0} w={200} />
          </ScopeList>
          <ScopeRule $mt={9} />
          <ScopeText $mt={7} $b>Security Filtering</ScopeText>
          <ScopeText $mt={9}>The settings in this GPO</ScopeText>
          <ScopeList $mt={7} $h={91}>
            <ListHead $h={22}>Name</ListHead>
            <ListRow $h={21}><Users dim /><ListCell $sel>Authenticated</ListCell></ListRow>
            <ListRow $h={22}><Users /><ListCell>DasAdmins</ListCell></ListRow>
            <ListRow $h={21}><Users /><ListCell>T</ListCell></ListRow>
          </ScopeList>
          <ScopeText $mt={6}><Btn $w={120} $h={30}></Btn></ScopeText>
          <ScopeRule $mt={21} />
          <ScopeText $mt={7} $b $sp={1.400}>WMI Filtering</ScopeText>
          <ScopeText $mt={8} $pl={4}>This GPO is linked</ScopeText>
          <ScopeSelect>&lt;none&gt;</ScopeSelect>
        </ScopePage>
      </Pane>
    </Panes>
    <StatusRow $mt={1} $h={24}><StatusCell /></StatusRow>
  </Win>
);

/* ---------- editor ---------- */

const Blue = styled.div`
  ${sunken}
  flex: none;
  height: 568px;
  padding: 1px;
  background: #6284df;
  overflow: hidden;
`;
const BlueHead = styled.div`
  display: flex;
  align-items: center;
  height: 75px;
  padding-left: 10px;
  color: #fff;
`;
const BlueArt = styled.span`
  margin-top: -5px;
`;
const BlueTitle = styled.h1`
  margin: -2px 0 0 9px;
  font-size: 38px;
  font-weight: normal;
  font-family: 'Noto Sans', sans-serif;
  letter-spacing: -0.280px;
  white-space: nowrap;
`;
const BlueBody = styled.div`
  display: flex;
  align-items: flex-start;
`;
const Cards = styled.div`
  width: 262px;
  padding: 15px 20px 0 15px;
  display: flex;
  flex-direction: column;
  gap: 19px;
`;
const Card = styled.article<{ $h: number }>`
  height: ${p => p.$h}px;
  border: 1px solid #fff;
  border-radius: 4px 4px 0 0;
  background: #d6dff7;
  color: #8b8b8b;
  overflow: hidden;
`;
const CardHead = styled.h3`
  margin: 0;
  height: 30px;
  padding-left: 13px;
  line-height: 34px;
  font-size: 13.200px;
  color: #215dc6;
  letter-spacing: 0.300px;
  background: linear-gradient(to right, #fff 40%, #c6d3f7);
`;
const CardText = styled.p`
  margin: 0;
  padding: 9px 13px;
  line-height: 16px;
  letter-spacing: -0.050px;
`;
const Grid = styled.div`
  width: 466px;
  height: 480px;
  background: #fff;
`;
const GridHead = styled.div`
  display: flex;
  height: 21px;
`;
const GridCol = styled.span<{ $w: number }>`
  ${raised}
  flex: none;
  width: ${p => p.$w}px;
  padding-left: 6px;
  line-height: 21px;
  overflow: hidden;
  background: ${FACE};
`;
const SheetTabs = styled.div`
  height: 24px;
  display: flex;
  border-top: 1px solid #fff;
`;
const SheetTab = styled.span<{ $w: number; $ml?: number; $z?: number }>`
  position: relative;
  z-index: ${p => p.$z ?? 0};
  width: ${p => p.$w}px;
  height: 23px;
  margin-left: ${p => p.$ml ?? 0}px;
  display: flex;
  align-items: center;
  justify-content: center;
`;
const TabShape = styled.svg`
  position: absolute;
  left: 0;
  top: 0;
  z-index: -1;
`;
const EditorRight = styled.div`
  flex: 1;
  margin-left: 4px;
  display: flex;
  flex-direction: column;
`;

const editorTree: Node[] = [
  { t: 'Computer Configuration', lv: 0, i: <Computer />, ex: 'open' },
  { t: 'Policies', lv: 1, i: <Folder />, ex: 'closed' },
  { t: 'Preferences', lv: 1, i: <Folder />, ex: 'closed', sp: 0.3 },
  { t: 'User Configuration', lv: 0, i: <User />, ex: 'open' },
  { t: 'Policies', lv: 1, i: <Folder />, ex: 'closed' },
  { t: 'Preferences', lv: 1, i: <Folder />, ex: 'open', sp: 0.3 },
  { t: 'Windows Settings', lv: 2, i: <Folder />, ex: 'closed' },
  { t: 'Control Panel Settings', lv: 2, i: <CpFolder />, ex: 'open' },
  { t: 'Data Sources', lv: 3, i: <DataSrc />, sp: 0.15 },
  { t: 'Devices', lv: 3, i: <Devices /> },
  { t: 'Folder Options', lv: 3, i: <FolderOpt />, sp: 0.15 },
  { t: 'Internet Settings', lv: 3, i: <Internet />, sp: 0.2 },
  { t: 'Local Users and Groups', lv: 3, i: <LocalUsers />, sel: true },
  { t: 'Network Options', lv: 3, i: <NetOpt />, sp: 0.1 },
  { t: 'Power Options', lv: 3, i: <Power />, sp: 0.2 },
  { t: 'Printers', lv: 3, i: <PrinterC />, sp: 0.1 },
  { t: 'Regional Options', lv: 3, i: <Regional /> },
  { t: 'Scheduled Tasks', lv: 3, i: <Sched /> },
  { t: 'Start Menu', lv: 3, i: <StartM />, sp: 0.15 },
];

const Editor = () => (
  <Win $x={304} $y={93} $w={1001} $h={715} $pad="4px 4px 3px 4px">
    <TitleBar $h={23} $sp={0.350} $pr={2}>
      <ScrollI s={18} /><TitleText $ml={4}>Group Policy Management Editor</TitleText><WinButtons />
    </TitleBar>
    <Bar $h={30} $mt={1}>
      <MenuItem $w={9} />
      <MenuItem $w={41}>File</MenuItem><MenuItem $w={57}>Action</MenuItem><MenuItem $w={47}>View</MenuItem><MenuItem $w={40}>Help</MenuItem>
    </Bar>
    <Bar $h={30}>
      <Tool $w={28}><Arrow back /></Tool><Tool $w={29}><Arrow /></Tool>
      <ToolSep $l={4} $r={7} />
      <Tool $w={22}><FolderUp /></Tool><MenuItem $w={4} /><Tool $w={28} $pressed><PaneIcon /></Tool>
      <ToolSep $l={5} $r={7} />
      <Tool $w={22}><CopyI /></Tool><Tool $w={36}><Clip /></Tool>
      <ToolSep $l={1} $r={6} />
      <Tool $w={22}><PrintI /></Tool><Tool $w={37}><Refresh /></Tool><Tool $w={22}><Export /></Tool>
      <ToolSep $l={6} $r={7} />
      <Tool $w={22}><HelpBook /></Tool><Tool $w={37}><PaneIcon flip /></Tool>
      <ToolSep $l={0} $r={7} />
      <Tool $w={22}><ScriptI /></Tool><Tool $w={36}><NoI /></Tool><Tool $w={22}><PlusI /></Tool>
    </Bar>
    <Panes $mt={5} $h={590}>
      <Pane $w={243}>
        <Tree>
          <TreeRow $pl={4}><ScrollI /><TreeLabel $sp={0.300}>DasAdmins [W2K8-AD-DHCP.AD.DASWEBS.COM] Policy</TreeLabel></TreeRow>
          <TreeView base={9} items={editorTree} />
        </Tree>
        <HScroll ml={0} w={128} />
      </Pane>
      <EditorRight>
        <Blue>
          <BlueHead><BlueArt><UsersArt s={51} /></BlueArt><BlueTitle>Local Users and Groups</BlueTitle></BlueHead>
          <BlueBody>
            <Cards>
              <Card $h={218}><CardHead>Processing</CardHead></Card>
              <Card $h={200}><CardHead>Description</CardHead><CardText>No policies selected</CardText></Card>
            </Cards>
            <Grid>
              <GridHead><GridCol $w={163}>Name</GridCol><GridCol $w={66}>Order</GridCol><GridCol $w={68}>Action</GridCol><GridCol $w={126}>Full Name</GridCol><GridCol $w={43}>Description</GridCol></GridHead>
            </Grid>
          </BlueBody>
        </Blue>
        <SheetTabs>
          <SheetTab $w={109} $ml={-2} $z={2}>
            <TabShape width="112" height="24"><path d="M0 0L11 21.500H98L109 0" fill="#fff" /><path d="M1 1L11 21" stroke="#000" strokeWidth="1.300" /><path d="M11 21.500h87" stroke="#8a8a8a" /><path d="M98 21L108 1" stroke="#000" strokeWidth="1.300" /></TabShape>
            Preferences
          </SheetTab>
          <SheetTab $w={80} $ml={-5} $z={1}>
            <TabShape width="84" height="24"><path d="M5 1.500h70L80 12l-5 9.500H6L1 10z" fill={FACE} stroke="#333" strokeWidth="1.300" /></TabShape>
            Extended
          </SheetTab>
        </SheetTabs>
      </EditorRight>
    </Panes>
    <StatusRow $mt={2} $h={24}><StatusCell>Local Users and Groups</StatusCell></StatusRow>
  </Win>
);

/* ---------- new local group ---------- */

const TabStrip = styled.div`
  flex: none;
  height: 35px;
  padding: 0 0 0 7px;
  display: flex;
  align-items: flex-end;
`;
const Tab = styled.span<{ $w: number; $on?: boolean }>`
  width: ${p => p.$w}px;
  height: ${p => (p.$on ? 26 : 22)}px;
  margin-bottom: ${p => (p.$on ? -1 : 0)}px;
  z-index: ${p => (p.$on ? 1 : 0)};
  padding-left: ${p => (p.$on ? 8 : 4)}px;
  line-height: ${p => (p.$on ? 25 : 23)}px;
  border: solid;
  border-width: 1px 2px 0 1px;
  border-color: #fff #606060 #fff #fff;
  border-radius: 3px 3px 0 0;
  background: ${FACE};
  white-space: nowrap;
`;
const TabPage = styled.div`
  flex: none;
  margin: 0 7px;
  height: 449px;
  border: 1px solid;
  border-color: #fff #505050 #505050 #fff;
  box-shadow: inset -1px -1px #868482;
`;
const FormRow = styled.div<{ $mt: number; $h: number; $pl: number; $gap?: number }>`
  display: flex;
  align-items: center;
  gap: ${p => p.$gap ?? 0}px;
  height: ${p => p.$h}px;
  margin-top: ${p => p.$mt}px;
  padding-left: ${p => p.$pl}px;
  white-space: nowrap;
`;
const FieldLabel = styled.label<{ $w: number; $ml?: number }>`
  width: ${p => p.$w}px;
  margin-left: ${p => p.$ml ?? 0}px;
`;
const Combo = styled.div<{ $w: number }>`
  ${sunken}
  width: ${p => p.$w}px;
  height: 26px;
  padding: 2px 2px 2px 3px;
  display: flex;
  align-items: center;
  justify-content: space-between;
  background: #fff;
`;
const ComboBtn = styled.span`
  ${raised}
  width: 20px;
  height: 21px;
  display: flex;
  align-items: center;
  justify-content: center;
  background: ${FACE};
`;
const Rule = styled.div`
  height: 2px;
  margin: 6px 10px 0 5px;
  border-top: 1px solid #808080;
  border-bottom: 1px solid #fff;
`;
const Radio = styled.i<{ $on?: boolean }>`
  width: 13px;
  height: 13px;
  margin-top: -2px;
  border-radius: 50%;
  border: 1.500px solid;
  border-color: #6c6c6c #f4f4f4 #f4f4f4 #6c6c6c;
  background: ${p => (p.$on ? 'radial-gradient(circle, #000 2.300px, #fff 2.900px)' : '#fff')};
`;
const Members = styled.div`
  ${sunken}
  margin-left: 22px;
  width: 432px;
  height: 140px;
  padding: 1px;
  background: #fff;
`;
const Footer = styled.div`
  display: flex;
  justify-content: flex-end;
  gap: 7px;
  padding: 8px 8px 0 0;
`;

const GroupProperties = () => (
  <Win $x={740} $y={278} $w={505} $h={560} $pad="2px 3px">
    <TitleBar $h={23} $sp={0.220} $pr={2}><TitleText>New Local Group Properties</TitleText><Caption><CloseG /></Caption></TitleBar>
    <TabStrip><Tab $w={90} $on>Local Group</Tab><Tab $w={64}>Common</Tab></TabStrip>
    <TabPage>
      <FormRow $mt={14} $h={44} $pl={18}>
        <UsersArt s={41} /><FieldLabel $w={65} $ml={15}>Action:</FieldLabel>
        <Combo $w={314}>Update<ComboBtn><DownG /></ComboBtn></Combo>
      </FormRow>
      <Rule />
      <FormRow $mt={9} $h={26} $pl={21}>
        <FieldLabel $w={118}>Group name:</FieldLabel><Combo $w={275}><Grow /><ComboBtn><DownG /></ComboBtn></Combo>
        <FieldLabel $w={6} /><Btn $w={34} $h={26}>...</Btn>
      </FormRow>
      <FormRow $mt={4} $h={26} $pl={21}><FieldLabel $w={118}>Rename to:</FieldLabel><Combo $w={314} /></FormRow>
      <FormRow $mt={4} $h={26} $pl={21}><FieldLabel $w={118}>Description:</FieldLabel><Combo $w={314} /></FormRow>
      <FormRow $mt={10} $h={24} $pl={24} $gap={7}><Radio />Add the current user</FormRow>
      <FormRow $mt={0} $h={24} $pl={24} $gap={7}><Radio />Remove the current user</FormRow>
      <FormRow $mt={0} $h={24} $pl={24} $gap={7}><Radio $on />Do not configure for the current user</FormRow>
      <FormRow $mt={5} $h={16} $pl={21}>Members:</FormRow>
      <Members><ListHead $h={22}>Name</ListHead></Members>
      <FormRow $mt={8} $h={29} $pl={207} $gap={6}><Btn $w={79} $h={29}>Add...</Btn><Btn $w={79} $h={29} $off>Remove</Btn><Btn $w={79} $h={29} $off>Change...</Btn></FormRow>
    </TabPage>
    <Footer><Btn $w={94} $h={30}>OK</Btn><Btn $w={94} $h={30}>Cancel</Btn><Btn $w={94} $h={30} $off>Apply</Btn><Btn $w={94} $h={30}>Help</Btn></Footer>
  </Win>
);

/* ---------- select group ---------- */

const SelectBody = styled.div`
  font-family: ${MSSANS};
  font-size: 14px;
  letter-spacing: -0.200px;
  padding-left: 14px;
`;
const SelectLabel = styled.div<{ $mt: number; $sp?: number }>`
  margin-top: ${p => p.$mt}px;
  height: 16px;
  line-height: 15px;
  letter-spacing: ${p => p.$sp ?? -0.25}px;
`;
const SelectRow = styled.div<{ $mt: number }>`
  display: flex;
  gap: 7px;
  margin-top: ${p => p.$mt}px;
`;
const Box = styled.div<{ $h: number; $bg?: string }>`
  ${sunken}
  width: 423px;
  height: ${p => p.$h}px;
  padding: 3px 3px;
  line-height: 17px;
  letter-spacing: -0.450px;
  background: ${p => p.$bg ?? FACE};
`;
const Caret = styled.i`
  display: inline-block;
  width: 1px;
  height: 16px;
  vertical-align: top;
  background: #000;
`;
const Mnemonic = styled.span`
  text-decoration: underline;
`;
const Link = styled.a`
  color: #1a1a9c;
  text-decoration: underline;
`;
const Gap = styled.span`
  width: 221px;
`;
const Grip = styled.svg`
  position: absolute;
  right: 4px;
  bottom: 4px;
`;

const SelectGroup = () => (
  <Win $x={859} $y={457} $w={580} $h={309} $pad="3px 4px 3px 3px">
    <TitleBar $h={23} $active $sp={0.420} $pr={3}><TitleText $ml={1}>Select Group</TitleText><Caption><HelpG /></Caption><Caption $ml={3}><CloseG /></Caption></TitleBar>
    <SelectBody>
      <SelectLabel $mt={16}>Select this object type:</SelectLabel>
      <SelectRow $mt={4}><Box $h={29}>Group</Box><Btn $w={113} $h={29}>Object Types...</Btn></SelectRow>
      <SelectLabel $mt={9} $sp={-0.4}>From this location:</SelectLabel>
      <SelectRow $mt={2}><Box $h={29}>ad.daswebs.com</Box><Btn $w={113} $h={29}>Locations...</Btn></SelectRow>
      <SelectLabel $mt={15} $sp={-0.38}><Mnemonic>E</Mnemonic>nter the object name to select (<Link>examples</Link>):</SelectLabel>
      <SelectRow $mt={4}><Box $h={71} $bg="#fff">Administrator<Caret /></Box><Btn $w={113} $h={29}>Check Names</Btn></SelectRow>
      <SelectRow $mt={10}><Btn $w={113} $h={29}>Advanced...</Btn><Gap /><Btn $w={94} $h={29} $def>OK</Btn><Btn $w={94} $h={29}>Cancel</Btn></SelectRow>
    </SelectBody>
    <Grip width="15" height="15"><path d="M1 15L15 1M6 15l9-9M11 15l4-4" stroke="#808080" strokeWidth="1.800" /><path d="M0 14.500L14.500 0M5 14.500L14.500 5M10 14.500l4.500-4.500" stroke="#fff" strokeWidth=".8" /></Grip>
  </Win>
);

export default function App() {
  return (
    <>
      <Global />
      <Desktop>
        <WizardWindow />
        <ServerConsole />
        <Manager />
        <Editor />
        <GroupProperties />
        <SelectGroup />
      </Desktop>
    </>
  );
}
